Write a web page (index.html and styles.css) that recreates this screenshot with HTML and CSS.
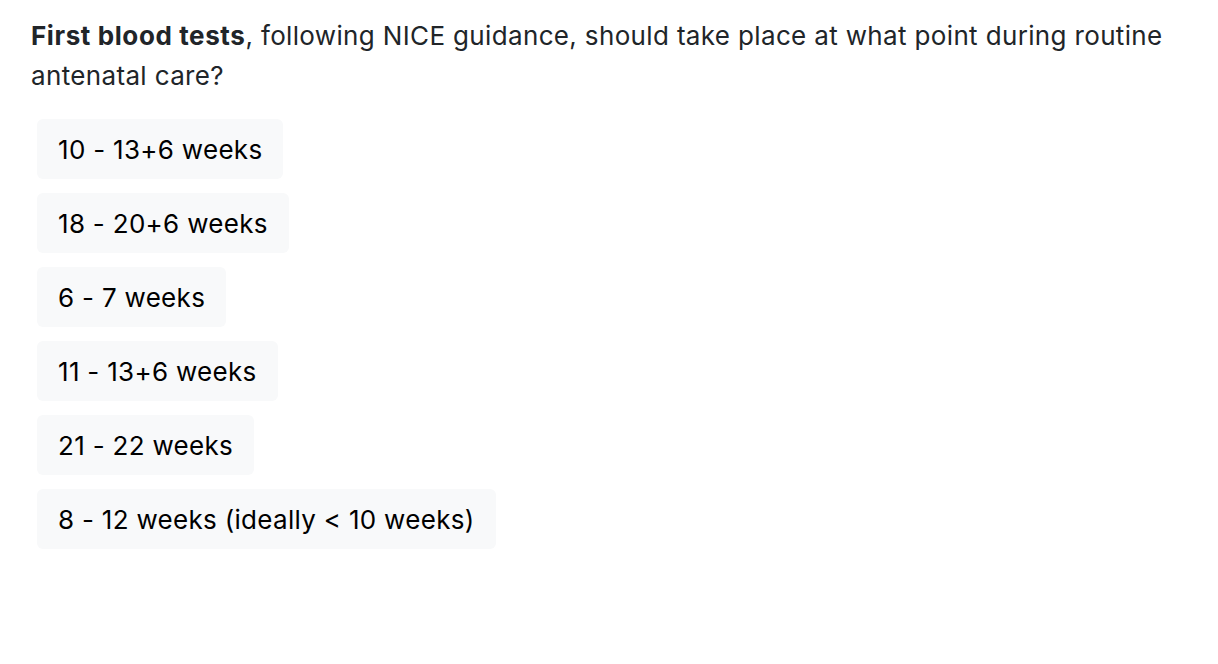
FILE: index.html
```html
<!DOCTYPE html>
<html>
<head>
<meta charset="utf-8">
<link rel="stylesheet" href="styles.css">
</head>
<body>
<div class="quiz">
  <p class="question"><strong>First blood tests</strong>, following NICE guidance, should take place at what point during routine antenatal care?</p>
  <ul class="options">
    <li class="option">10 - 13+6 weeks</li>
    <li class="option">18 - 20+6 weeks</li>
    <li class="option">6 - 7 weeks</li>
    <li class="option">11 - 13+6 weeks</li>
    <li class="option">21 - 22 weeks</li>
    <li class="option">8 - 12 weeks (ideally &lt; 10 weeks)</li>
  </ul>
</div>
</body>
</html>
```
FILE: styles.css
```css
html, body {
  margin: 0;
  padding: 0;
  background: #ffffff;
}
body {
  font-family: Inter, "Liberation Sans", Arial, sans-serif;
}
.quiz {
  padding: 16px 31px;
}
.question {
  margin: 0;
  font-size: 26px;
  line-height: 40px;
  letter-spacing: 0.35px;
  color: #212529;
}
.question strong {
  font-weight: 700;
  letter-spacing: 0.6px;
}
.options {
  list-style: none;
  margin: 23px 0 0 6px;
  padding: 0;
  display: flex;
  flex-direction: column;
  align-items: flex-start;
  gap: 14px;
}
.option {
  background: #f8f9fa;
  border-radius: 6px;
  padding: 17px 21px 15px;
  font-size: 26px;
  line-height: 28px;
  letter-spacing: 0.3px;
  color: #000000;
}
```
